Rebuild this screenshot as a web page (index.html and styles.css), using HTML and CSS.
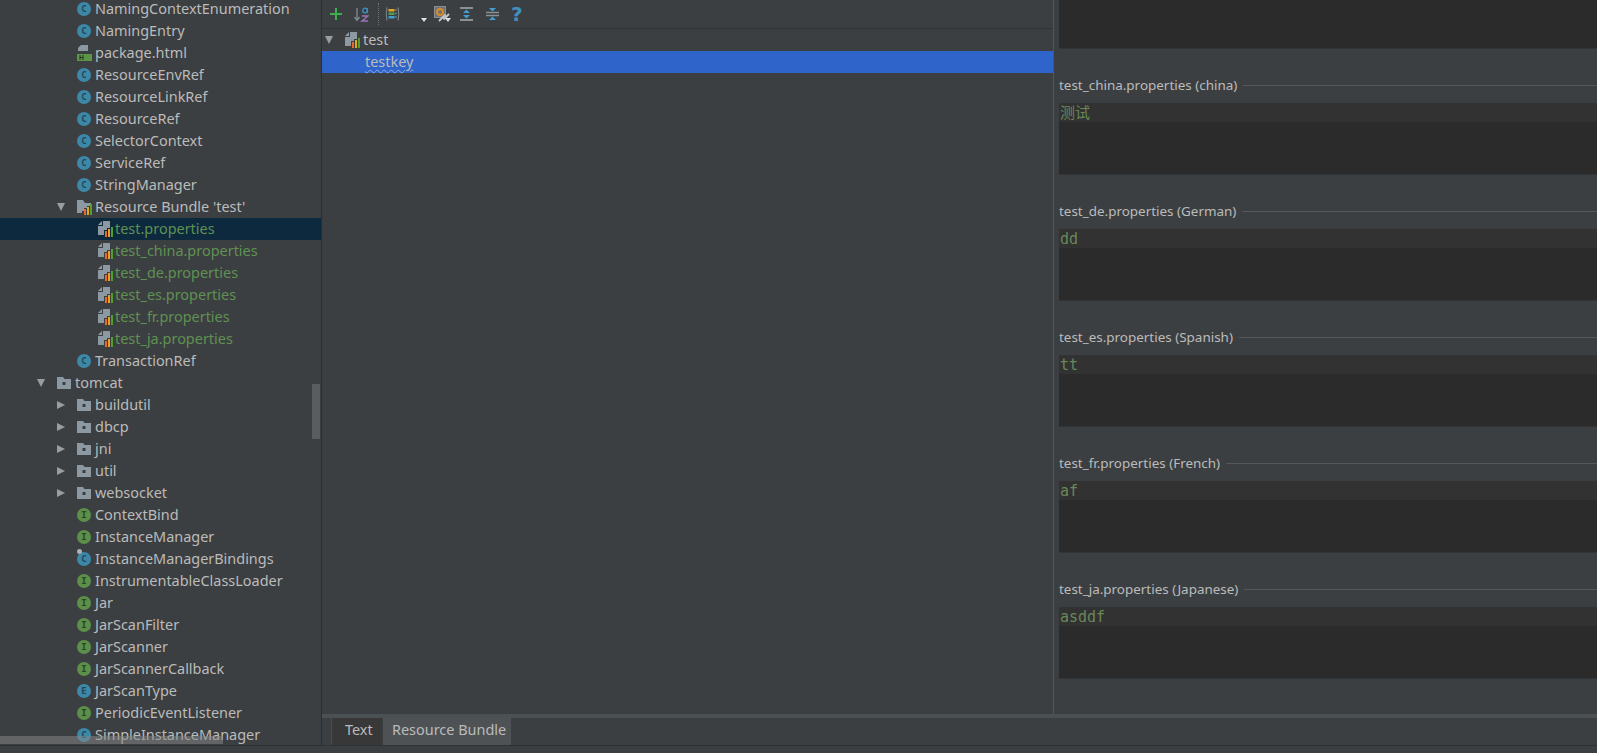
FILE: index.html
```html
<!DOCTYPE html>
<html lang="en">
<head>
<meta charset="utf-8">
<title>Resource Bundle</title>
<link rel="stylesheet" href="styles.css">
</head>
<body>
<svg class="sprite" xmlns="http://www.w3.org/2000/svg">
  <symbol id="folder" viewBox="0 0 14 12">
    <path d="M0 0h6l1.500 2H14v10H0z" fill="#8c99a3"/>
    <rect x="5.500" y="5" width="3" height="3" fill="#3c3f41"/>
  </symbol>
  <symbol id="propfile" viewBox="0 0 15 16">
    <path d="M5 0H12V7H9V9H6V14H0V5H5z" fill="#8c99a3"/>
    <path d="M0 4L4 0V4z" fill="#8c99a3"/>
    <rect x="7" y="10" width="2" height="6" fill="#e8692a"/>
    <rect x="10" y="8" width="2" height="8" fill="#e5a51f"/>
    <rect x="13" y="6" width="2" height="10" fill="#4f9e2f"/>
  </symbol>
  <symbol id="bundle" viewBox="0 0 15 15">
    <path d="M0 0H6L8 3H14V6H10V8H7V11H5V13H0z" fill="#8c99a3"/>
    <rect x="7" y="9" width="2" height="6" fill="#e8692a"/>
    <rect x="10" y="7" width="2" height="8" fill="#e5a51f"/>
    <rect x="13" y="4" width="2" height="11" fill="#4f9e2f"/>
  </symbol>
  <symbol id="html" viewBox="0 0 15 16">
    <path d="M4 0h7v6H1V3z" fill="#8c99a3"/>
    <rect x="0" y="9" width="15" height="7" fill="#5a9645"/>
    <path d="M3 10v5M6 10v5M3 12.500h3" stroke="#26351f" stroke-width="1" fill="none"/>
  </symbol>
</svg>

<div class="app">
  <div class="main">
    <aside class="project">
      <ul class="tree">
        <li class="row d2"><span class="badge cls">C</span>NamingContextEnumeration</li>
        <li class="row d2"><span class="badge cls">C</span>NamingEntry</li>
        <li class="row d2"><svg class="ico html"><use href="#html"/></svg>package.html</li>
        <li class="row d2"><span class="badge cls">C</span>ResourceEnvRef</li>
        <li class="row d2"><span class="badge cls">C</span>ResourceLinkRef</li>
        <li class="row d2"><span class="badge cls">C</span>ResourceRef</li>
        <li class="row d2"><span class="badge cls">C</span>SelectorContext</li>
        <li class="row d2"><span class="badge cls">C</span>ServiceRef</li>
        <li class="row d2"><span class="badge cls">C</span>StringManager</li>
        <li class="row d2 arrowed"><i class="tri down"></i><svg class="ico bundle"><use href="#bundle"/></svg>Resource Bundle 'test'</li>
        <li class="row d3 added selected"><svg class="ico prop"><use href="#propfile"/></svg>test.properties</li>
        <li class="row d3 added"><svg class="ico prop"><use href="#propfile"/></svg>test_china.properties</li>
        <li class="row d3 added"><svg class="ico prop"><use href="#propfile"/></svg>test_de.properties</li>
        <li class="row d3 added"><svg class="ico prop"><use href="#propfile"/></svg>test_es.properties</li>
        <li class="row d3 added"><svg class="ico prop"><use href="#propfile"/></svg>test_fr.properties</li>
        <li class="row d3 added"><svg class="ico prop"><use href="#propfile"/></svg>test_ja.properties</li>
        <li class="row d2"><span class="badge cls">C</span>TransactionRef</li>
        <li class="row d1 arrowed"><i class="tri down"></i><svg class="ico folder"><use href="#folder"/></svg>tomcat</li>
        <li class="row d2 arrowed"><i class="tri right"></i><svg class="ico folder"><use href="#folder"/></svg>buildutil</li>
        <li class="row d2 arrowed"><i class="tri right"></i><svg class="ico folder"><use href="#folder"/></svg>dbcp</li>
        <li class="row d2 arrowed"><i class="tri right"></i><svg class="ico folder"><use href="#folder"/></svg>jni</li>
        <li class="row d2 arrowed"><i class="tri right"></i><svg class="ico folder"><use href="#folder"/></svg>util</li>
        <li class="row d2 arrowed"><i class="tri right"></i><svg class="ico folder"><use href="#folder"/></svg>websocket</li>
        <li class="row d2"><span class="badge ifc">I</span>ContextBind</li>
        <li class="row d2"><span class="badge ifc">I</span>InstanceManager</li>
        <li class="row d2"><span class="badge cls pinned">C</span>InstanceManagerBindings</li>
        <li class="row d2"><span class="badge ifc">I</span>InstrumentableClassLoader</li>
        <li class="row d2"><span class="badge ifc">I</span>Jar</li>
        <li class="row d2"><span class="badge ifc">I</span>JarScanFilter</li>
        <li class="row d2"><span class="badge ifc">I</span>JarScanner</li>
        <li class="row d2"><span class="badge ifc">I</span>JarScannerCallback</li>
        <li class="row d2"><span class="badge cls">E</span>JarScanType</li>
        <li class="row d2"><span class="badge ifc">I</span>PeriodicEventListener</li>
        <li class="row d2"><span class="badge cls">C</span>SimpleInstanceManager</li>
      </ul>
      <div class="vthumb"></div>
      <div class="hthumb"></div>
    </aside>

    <div class="work">
      <div class="split">
        <section class="center">
          <div class="toolbar">
            <svg class="tool t-add" viewBox="0 0 12 12"><path d="M6 0v12M0 6h12" stroke="#3fae4f" stroke-width="2"/></svg>
            <svg class="tool t-sort" viewBox="0 0 15 15">
              <path d="M3 1v12M0.500 10L3 13.500 5.500 10" stroke="#7f8a90" stroke-width="1.300" fill="none"/>
              <circle cx="11" cy="3.500" r="2.300" fill="none" stroke="#3f8fc4" stroke-width="1.300"/>
              <path d="M13.300 1v5" stroke="#3f8fc4" stroke-width="1.200"/>
              <path d="M8 9h6l-6 5h6" stroke="#9a73b8" stroke-width="1.400" fill="none"/>
            </svg>
            <i class="tool-sep"></i>
            <svg class="tool t-group" viewBox="0 0 15 14">
              <path d="M2 0.500Q0.500 7 2 13.500M13 0.500Q14.500 7 13 13.500" stroke="#7f8a90" stroke-width="1" fill="none"/>
              <rect x="3.500" y="2" width="6" height="2.500" fill="#e5a51f"/>
              <rect x="3.500" y="5.500" width="6" height="2.500" fill="#4f9e4f"/>
              <rect x="3.500" y="9" width="6" height="2.500" fill="#3f9fd0"/>
              <path d="M10.500 3h1M10.500 6.500h1M10.500 10h1" stroke="#a0a8ad" stroke-width="1.500"/>
            </svg>
            <i class="drop d-first"></i>
            <svg class="tool t-settings" viewBox="0 0 17 16">
              <rect x="0.500" y="0.500" width="11" height="11" fill="none" stroke="#8a8f92"/>
              <rect x="1" y="1" width="10" height="10" fill="#6e7274"/>
              <circle cx="6" cy="6" r="3" fill="none" stroke="#d98a2b" stroke-width="2"/>
              <path d="M5 15L11.500 8.500M9.500 13.500L15 8" stroke="#c4c8ca" stroke-width="1.800"/>
            </svg>
            <i class="drop d-second"></i>
            <svg class="tool t-expand" viewBox="0 0 13 14">
              <path d="M0 1h13M0 13h13" stroke="#8a9196" stroke-width="2"/>
              <path d="M6.500 2.500L10 6H3zM6.500 11.500L3 8h7z" fill="#3f9fd0"/>
            </svg>
            <svg class="tool t-collapse" viewBox="0 0 13 14">
              <path d="M0 5.500h13M0 8.500h13" stroke="#8a9196" stroke-width="1.500"/>
              <path d="M6.500 4.500L3 1h7zM6.500 9.500L10 13H3z" fill="#3f9fd0"/>
            </svg>
            <span class="t-help">?</span>
          </div>
          <div class="keyrow">
            <i class="tri down"></i>
            <svg class="ico prop"><use href="#propfile"/></svg>
            <span>test</span>
          </div>
          <div class="keyrow chosen"><span class="key">testkey</span></div>
        </section>

        <section class="values">
          <div class="editor first"></div>
          <h3 class="vlabel"><span>test_china.properties (china)</span></h3>
          <div class="editor"><div class="line">测试</div></div>
          <h3 class="vlabel"><span>test_de.properties (German)</span></h3>
          <div class="editor"><div class="line">dd</div></div>
          <h3 class="vlabel"><span>test_es.properties (Spanish)</span></h3>
          <div class="editor"><div class="line">tt</div></div>
          <h3 class="vlabel"><span>test_fr.properties (French)</span></h3>
          <div class="editor"><div class="line">af</div></div>
          <h3 class="vlabel"><span>test_ja.properties (Japanese)</span></h3>
          <div class="editor"><div class="line">asddf</div></div>
        </section>
      </div>
      <div class="band"></div>
      <div class="tabs">
        <span class="tab dark">Text</span>
        <span class="tab light">Resource Bundle</span>
      </div>
    </div>
  </div>
  <div class="status"></div>
</div>
</body>
</html>
```

FILE: styles.css
```css
* { box-sizing: border-box; }
html, body { margin: 0; height: 100%; overflow: hidden; }
body {
  background: #3c3f41;
  color: #bbbbbb;
  font: 14.45px/22px "Noto Sans", "Open Sans", sans-serif;
}
.sprite { display: none; }
.app { height: 753px; display: flex; flex-direction: column; }
.main { height: 745px; display: flex; }
.status { height: 8px; border-top: 1px solid #2f3132; }

/* project tree */
.project {
  width: 322px;
  flex: none;
  position: relative;
  overflow: hidden;
  border-right: 1px solid #2b2d2e;
}
.tree { list-style: none; margin: -2px 0 0; padding: 0; }
.row { height: 22px; display: flex; align-items: center; white-space: nowrap; }
.d1 { padding-left: 57px; }
.d2 { padding-left: 77px; }
.d3 { padding-left: 98px; }
.arrowed { position: relative; }
.added { color: #5f9153; }
.selected { background: #0d293e; }
.ico { flex: none; display: block; }
.folder { width: 14px; height: 12px; margin-right: 4px; }
.prop { width: 15px; height: 16px; margin-right: 2px; }
.bundle { width: 15px; height: 15px; margin-right: 3px; }
.html { width: 15px; height: 16px; margin-right: 3px; }
.badge {
  flex: none;
  width: 14px;
  height: 14px;
  margin-right: 4px;
  border-radius: 50%;
  font: bold 9px/14px "DejaVu Sans Mono", monospace;
  text-align: center;
  position: relative;
}
.cls { background: #3d88a8; color: #234656; }
.ifc { background: #5b8f4a; color: #2c4424; }
.pinned::before {
  content: "";
  position: absolute;
  left: 0;
  top: -3px;
  width: 5px;
  height: 5px;
  border-radius: 50%;
  background: #a9b2b8;
}
.tri { display: block; width: 0; height: 0; flex: none; }
.tri.down { border-style: solid; border-width: 8px 4.500px 0; border-color: #9a9d9f transparent transparent; }
.tri.right { border-style: solid; border-width: 4.500px 0 4.500px 8px; border-color: transparent transparent transparent #9a9d9f; }
.row .tri { position: absolute; }
.d1 .tri { left: 37px; }
.d2 .tri { left: 57px; }
.vthumb {
  position: absolute;
  left: 312px;
  top: 384px;
  width: 8px;
  height: 55px;
  background: #5a5d5f;
}
.hthumb {
  position: absolute;
  left: 0;
  top: 736px;
  width: 223px;
  height: 8px;
  background: rgba(135, 138, 140, 0.5);
}

/* work area */
.work { flex: 1; min-width: 0; display: flex; flex-direction: column; }
.split { height: 714px; display: flex; }
.center { width: 732px; flex: none; border-right: 1px solid #515658; }
.toolbar {
  height: 29px;
  display: flex;
  align-items: center;
  border-bottom: 1px solid #323232;
  position: relative;
}
.tool { flex: none; display: block; }
.t-add { width: 12px; height: 12px; margin: 0 12px 0 8px; }
.t-sort { width: 15px; height: 15px; margin-right: 9px; }
.tool-sep { flex: none; height: 22px; border-left: 1px dotted #6f7375; margin-right: 6px; }
.t-group { width: 15px; height: 14px; margin-right: 21px; }
.drop {
  flex: none;
  width: 0;
  height: 0;
  border-style: solid;
  border-width: 4px 3px 0;
  border-color: #e0e0e0 transparent transparent;
  align-self: flex-start;
  margin-top: 18px;
}
.d-first { margin-right: 7px; }
.d-second { margin-left: -6px; margin-right: 9px; }
.t-settings { width: 17px; height: 16px; margin-right: 0; }
.t-expand { width: 13px; height: 14px; margin-right: 13px; }
.t-collapse { width: 13px; height: 14px; margin-right: 12px; }
.t-help { font: bold 20px/22px "DejaVu Sans", sans-serif; color: #3f90c0; }
.keyrow { height: 22px; display: flex; align-items: center; padding-left: 3px; }
.keyrow .prop { margin-left: 12px; margin-right: 3px; }
.chosen { background: #2f65ca; padding-left: 43px; }
.key {
  color: #bbbbbb;
  text-decoration: underline wavy #8fa8d8 1px;
  text-underline-offset: 2px;
}

.values { flex: 1; min-width: 0; padding-left: 5px; overflow: hidden; }
.editor {
  height: 72px;
  background: #2b2b2b;
  border-bottom: 1px solid #323537;
}
.editor.first { margin-top: -23px; }
.line {
  height: 19px;
  background: #323232;
  color: #6a8759;
  font: 15px/20px "DejaVu Sans Mono", "Noto Sans CJK SC", monospace;
  padding-left: 1px;
}
.vlabel {
  margin: 0;
  height: 54px;
  padding-top: 27px;
  padding-bottom: 9px;
  display: flex;
  align-items: center;
  font: 400 13.45px/18px "Noto Sans", "Open Sans", sans-serif;
  color: #bbbbbb;
  white-space: nowrap;
}
.vlabel::after {
  content: "";
  flex: 1;
  border-top: 1px solid #54585a;
  margin-left: 6px;
}

.band { height: 4px; background: #4b5052; }
.tabs { height: 27px; display: flex; padding-left: 9px; }
.tab { display: block; height: 27px; line-height: 24px; }
.tab.dark { width: 51px; background: #383838; border-left: 1px solid #4a4d4f; padding-left: 13px; margin-right: 1px; }
.tab.light { width: 128px; background: #4e5254; padding-left: 9px; }
```
